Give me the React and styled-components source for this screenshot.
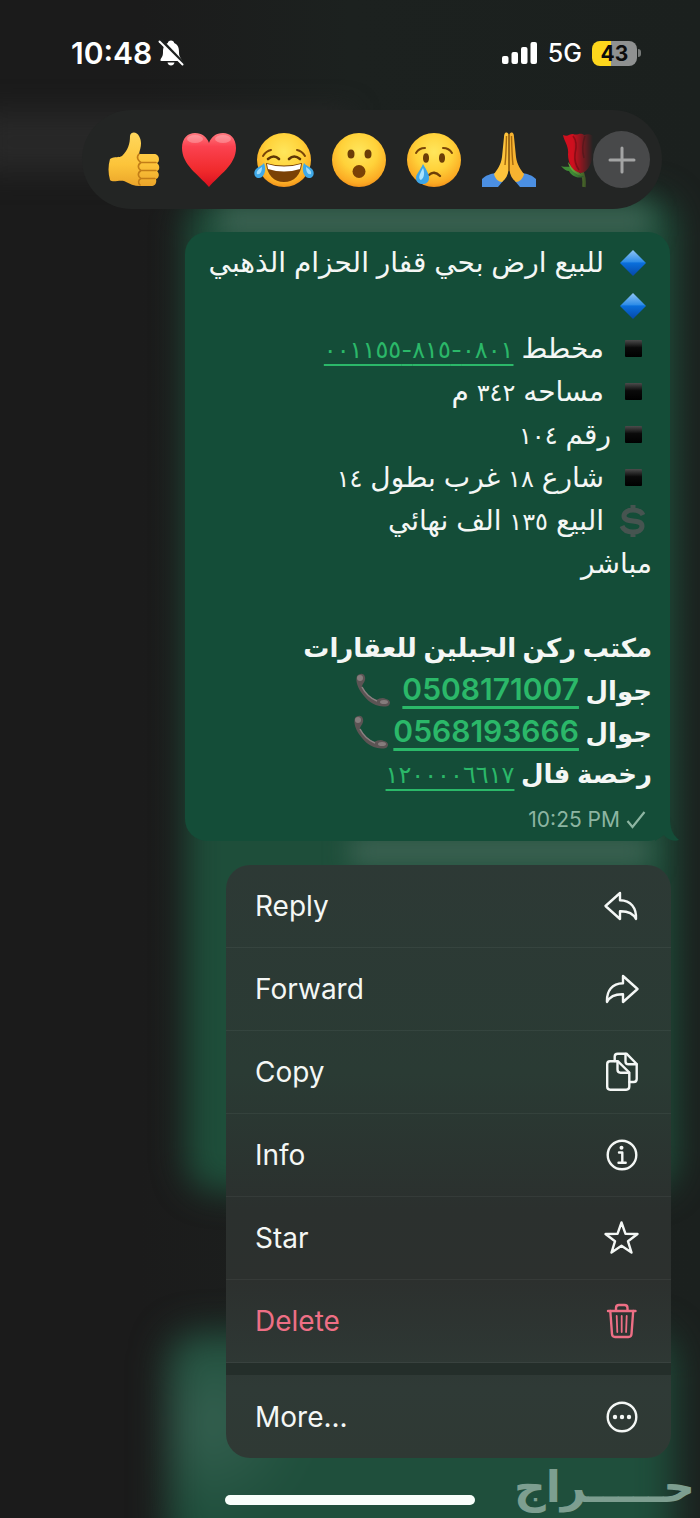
import React from "react";
import styled, { createGlobalStyle } from "styled-components";

const GlobalStyle = createGlobalStyle`
  * {
    box-sizing: border-box;
  }
  body {
    margin: 0;
    background: #1b1b1b;
  }
  button {
    border: 0;
    padding: 0;
    background: none;
    color: inherit;
    font: inherit;
    cursor: pointer;
  }
  p {
    margin: 0;
  }
  svg {
    display: block;
    flex-shrink: 0;
  }
`;

const ThumbsUp = () => (
  <svg width="56" height="56" viewBox="0 0 56 56">
    <defs>
      <linearGradient id="thumb" x1="0" y1="0" x2="0" y2="1">
        <stop offset="0" stopColor="#ffd75c" />
        <stop offset="0.6" stopColor="#fcc43a" />
        <stop offset="1" stopColor="#eba52a" />
      </linearGradient>
    </defs>
    <path
      fill="url(#thumb)"
      d="M4 27C9 24 13 26 16 24C22 18 24 12 24 4C25-1 31 0 33 4C37 11 34 17 33 22L48 22C54 22 54 30 51 31C54 33 54 38 51 39C54 42 53 46 50 47C51 51 49 54 45 54L34 54C28 54 24 52 18 49C12 48 7 51 4 48C2 41 2 34 4 27Z"
    />
    <path
      fill="none"
      stroke="#c27d17"
      strokeWidth="1.6"
      strokeLinecap="round"
      d="M33 22C30 25 32 29 35 30.500L50 30.500M35 30.500C31 33 32 37 35 38.500L50 38.500M35 38.500C31 41 32 45 35 46.500L49 46.500M35 46.500C32 48 32 51 34 53"
    />
  </svg>
);

const Heart = () => (
  <svg width="56" height="56" viewBox="0 0 56 56">
    <defs>
      <linearGradient id="heart" x1="0" y1="0" x2="0" y2="1">
        <stop offset="0" stopColor="#ff7a80" />
        <stop offset="0.25" stopColor="#fb4250" />
        <stop offset="0.7" stopColor="#f02a2c" />
        <stop offset="1" stopColor="#d9101f" />
      </linearGradient>
    </defs>
    <path
      fill="url(#heart)"
      d="M28 55C18 43 1 33 1 16C1 6 7 1 14 1C21 1 26 5 28 11C30 5 35 1 42 1C49 1 55 6 55 16C55 33 38 43 28 55Z"
    />
    <ellipse cx="14" cy="7" rx="8" ry="4" fill="#fff" opacity="0.25" />
    <ellipse cx="42" cy="7" rx="8" ry="4" fill="#fff" opacity="0.25" />
  </svg>
);

const FaceBase = ({ id }) => (
  <>
    <defs>
      <radialGradient id={id} cx="0.5" cy="0.35" r="0.68">
        <stop offset="0" stopColor="#ffe65c" />
        <stop offset="0.5" stopColor="#ffd23a" />
        <stop offset="0.85" stopColor="#fbab24" />
        <stop offset="1" stopColor="#ee8a18" />
      </radialGradient>
    </defs>
    <circle cx="28" cy="28" r="27" fill={`url(#${id})`} />
  </>
);

const Joy = () => (
  <svg width="60" height="56" viewBox="-2 0 60 56">
    <FaceBase id="joy" />
    <path
      fill="none"
      stroke="#7a4508"
      strokeWidth="2"
      strokeLinecap="round"
      d="M7 24Q10 19 15 18M49 24Q46 19 41 18"
    />
    <path
      fill="none"
      stroke="#5f3606"
      strokeWidth="2.6"
      strokeLinecap="round"
      d="M12 27Q18 22 23 27M33 27Q38 22 44 27"
    />
    <path fill="#7a4106" d="M10 31Q28 36 46 31C45 43 38 50 28 50C18 50 11 43 10 31Z" />
    <path fill="#fff" d="M11 32Q28 37 45 32L44 37Q28 42 12 37Z" />
    <path fill="#3fa9e8" d="M8 31C11 38 8 46 3 46C-2 46-3 40 0 37C3 34 6 34 8 31Z" />
    <path fill="#3fa9e8" d="M48 31C45 38 48 46 53 46C58 46 59 40 56 37C53 34 50 34 48 31Z" />
    <path fill="#9fdcfb" d="M6 35C6 40 4 43 1 42C0 39 3 37 6 35ZM50 35C50 40 52 43 55 42C56 39 53 37 50 35Z" />
  </svg>
);

const Wow = () => (
  <svg width="56" height="56" viewBox="0 0 56 56">
    <FaceBase id="wow" />
    <ellipse cx="20" cy="22" rx="3.500" ry="4.500" fill="#6b3d07" />
    <ellipse cx="37" cy="22" rx="3.500" ry="4.500" fill="#6b3d07" />
    <ellipse cx="28" cy="39.500" rx="6.500" ry="6.500" fill="#7a4106" />
  </svg>
);

const Cry = () => (
  <svg width="56" height="56" viewBox="0 0 56 56">
    <FaceBase id="cry" />
    <path
      fill="none"
      stroke="#7a4508"
      strokeWidth="2"
      strokeLinecap="round"
      d="M10 21Q13 16 19 16M46 21Q43 16 37 16"
    />
    <ellipse cx="20" cy="26" rx="3" ry="4.800" fill="#6b3d07" />
    <ellipse cx="36" cy="26" rx="3" ry="4.800" fill="#6b3d07" />
    <path
      fill="none"
      stroke="#6b3d07"
      strokeWidth="2.4"
      strokeLinecap="round"
      d="M23 43Q28 38 34 44"
    />
    <path fill="#3da5e6" d="M17 32C21 39 23 42 23 46C23 50 20 52 17 52C13 52 10 50 10 46C10 42 14 39 17 32Z" />
    <path fill="#a9e2fc" d="M17 36C19 41 18 46 15 48C12 47 13 43 17 36Z" />
  </svg>
);

const Pray = () => (
  <svg width="56" height="56" viewBox="0 0 56 56">
    <path fill="#4b8fe2" d="M1 47C5 43 10 42 14 41L22 49L17 55L1 55Z" />
    <path fill="#4b8fe2" d="M55 47C51 43 46 42 42 41L34 49L39 55L55 55Z" />
    <path
      fill="#fdc33c"
      d="M27.500 2C25-1 23 1 23 5L21 25C20 33 16 38 13 42C14 47 18 50 21 50C25 47 27 43 27.500 38Z"
    />
    <path
      fill="#f7b330"
      d="M28.500 2C31-1 33 1 33 5L35 25C36 33 40 38 43 42C42 47 38 50 35 50C31 47 29 43 28.500 38Z"
    />
    <path fill="none" stroke="#a5690f" strokeWidth="1.400" d="M28 2L28 39M25.500 4Q25 24 24 33M30.500 4Q31 24 32 33" />
  </svg>
);

const Rose = () => (
  <svg width="56" height="56" viewBox="0 0 56 56">
    <path fill="none" stroke="#6ba62f" strokeWidth="3.500" d="M25 38Q29 45 28 55" />
    <path fill="#3f8b35" d="M5 34C11 36 15 33 19 37L28 45C20 47 15 43 13 39Q9 39 5 34Z" />
    <path fill="#67a43a" d="M12 30C16 36 22 38 27 44C19 43 13 37 12 30Z" />
    <path
      fill="#cf0f1e"
      d="M7 3C12 5 13 2 17 2C21 4 24 0 28 3C33 1 37 3 40 6C36 12 39 24 34 33Q31 40 25 41C17 40 12 32 12 22C13 14 8 9 7 3Z"
    />
    <path fill="none" stroke="#960a15" strokeWidth="1.600" d="M17 4Q22 10 19 22Q18 31 23 38M29 4Q25 15 28 26" />
  </svg>
);

const reactions = [
  { name: "Thumbs up", art: <ThumbsUp /> },
  { name: "Red heart", art: <Heart /> },
  { name: "Tears of joy", art: <Joy /> },
  { name: "Surprised", art: <Wow /> },
  { name: "Crying", art: <Cry /> },
  { name: "Folded hands", art: <Pray /> },
  { name: "Rose", art: <Rose /> },
];

const icons = {
  reply: (
    <path d="M17 7L2.500 20L17 33V25.200C25 25 30 27 33 33C33.500 22 28 14.500 17 14.300Z" />
  ),
  forward: (
    <path d="M20 7L34.500 20L20 33V25.200C12 25 7 27 4 33C3.500 22 9 14.500 20 14.300Z" />
  ),
  copy: (
    <>
      <path d="M7 9.300H15L26.300 20.500V34.500Q26.300 37.700 23.200 37.700H7.200Q4.200 37.700 4.200 34.500V12.300Q4.200 9.300 7 9.300Z" />
      <path d="M14.500 9.500V17.500Q14.500 20.700 17.500 20.700H26" />
      <path d="M11.700 9V4.500Q11.700 1.700 14.700 1.700H23.500L33.700 12V27Q33.700 30 30.700 30H26.500" />
      <path d="M22.500 2V9.500Q22.500 12.300 25.500 12.300H33.500" />
    </>
  ),
  info: (
    <>
      <circle cx="19" cy="20" r="14.300" />
      <path d="M16 17.500H19.300V27.500M15.500 27.700H22.700" />
      <circle cx="18.500" cy="12.700" r="2" fill="currentColor" stroke="none" />
    </>
  ),
  star: (
    <path d="M18.500 4.500L22.500 15.800L34.500 16L25 23.300L28.500 34.500L18.500 27.800L8.500 34.500L12 23.300L2.500 16L14.500 15.800Z" />
  ),
  trash: (
    <>
      <path d="M5 10H32.500M13 9.500V7Q13 4 16 4H21.500Q24.500 4 24.500 7V9.500" />
      <path d="M7.300 10L9 33Q9.200 36 12 36H25.500Q28.300 36 28.500 33L30.200 10" />
      <path strokeWidth="1.800" d="M13.700 15L14.300 31M18.700 15V31M23.700 15L23.100 31" />
    </>
  ),
  more: (
    <>
      <circle cx="19" cy="20" r="14.300" />
      <g fill="currentColor" stroke="none">
        <circle cx="12" cy="20" r="2.200" />
        <circle cx="19" cy="20" r="2.200" />
        <circle cx="26" cy="20" r="2.200" />
      </g>
    </>
  ),
};

const MenuIcon = ({ name }) => (
  <svg
    width="36"
    height="40"
    viewBox="0 0 36 40"
    fill="none"
    stroke="currentColor"
    strokeWidth="2.400"
    strokeLinejoin="round"
    strokeLinecap="round"
    aria-hidden="true"
  >
    {icons[name]}
  </svg>
);

const Diamond = () => (
  <svg width="38" height="28" viewBox="0 0 38 28">
    <defs>
      <linearGradient id="diamond" x1="0" y1="0" x2="0" y2="1">
        <stop offset="0" stopColor="#8fc4f5" />
        <stop offset="0.45" stopColor="#2f8de8" />
        <stop offset="0.5" stopColor="#0a6fdc" />
        <stop offset="1" stopColor="#0648a8" />
      </linearGradient>
    </defs>
    <path fill="url(#diamond)" d="M19 1L32 14L19 27L6 14Z" />
  </svg>
);

const Square = () => (
  <svg width="38" height="28" viewBox="0 0 38 28">
    <defs>
      <linearGradient id="square" x1="0" y1="0" x2="0" y2="1">
        <stop offset="0" stopColor="#4c4c4c" />
        <stop offset="0.45" stopColor="#0a0a0a" />
        <stop offset="1" stopColor="#000" />
      </linearGradient>
    </defs>
    <rect x="11" y="5" width="17" height="17" rx="1" fill="url(#square)" />
  </svg>
);

const Dollar = () => (
  <svg width="38" height="36" viewBox="0 0 38 36">
    <path
      fill="none"
      stroke="#465450"
      strokeWidth="5"
      d="M29 12C27 8 23 7 19 7C13 7 10 10 10 13C10 21 28 15 28 23C28 27 24 29 19 29C14 29 10 28 8 23M19 2V7M19 29V34"
    />
  </svg>
);

const Phone = () => (
  <svg width="38" height="36" viewBox="0 0 38 36">
    <path
      fill="#5c5454"
      d="M3 4C6 1 10 1 11 5C12 9 9 11 8 14C10 20 16 25 22 28C26 26 29 25 32 27C37 28 37 32 34 34C26 36 16 32 10 24C4 17 1 9 3 4Z"
    />
    <path fill="none" stroke="#8b8282" strokeWidth="1.500" d="M8 15C11 21 16 26 23 29" />
    <circle cx="6" cy="6" r="3" fill="#857c7c" />
    <ellipse cx="30" cy="30" rx="4" ry="2" fill="#857c7c" />
  </svg>
);

const menu = [
  { label: "Reply", icon: "reply" },
  { label: "Forward", icon: "forward" },
  { label: "Copy", icon: "copy" },
  { label: "Info", icon: "info" },
  { label: "Star", icon: "star" },
  { label: "Delete", icon: "trash", danger: true },
];

function StatusBar() {
  return (
    <Status>
      <Clock>
        <span>10:48</span>
        <svg width="28" height="28" viewBox="0 0 28 28" fill="#fff">
          <path d="M14 1.500C15.800 1.500 17 2.600 17.200 4C21 5.500 22 9 22 13C22 17 23 18 24.500 20.500Q25 22 23.500 22H4.500Q3 22 3.500 20.500C5 18 6 17 6 13C6 9 7 5.500 10.800 4C11 2.600 12.200 1.500 14 1.500Z" />
          <path d="M10.500 23.500H17.500Q16.800 26.500 14 26.500Q11.200 26.500 10.500 23.500Z" />
          <path stroke="#1e2120" strokeWidth="3" d="M4 1L28 26" />
          <path stroke="#fff" strokeWidth="2" strokeLinecap="round" d="M2.500 2.500L25.500 25.500" />
        </svg>
      </Clock>
      <Radio>
        <svg width="36" height="24" viewBox="0 0 36 24" fill="#fff">
          <rect x="0" y="15" width="6.500" height="8" rx="2" />
          <rect x="9.500" y="11" width="6.500" height="12" rx="2" />
          <rect x="19" y="6" width="6.500" height="17" rx="2" />
          <rect x="28.500" y="1" width="6.500" height="22" rx="2" />
        </svg>
        <Network>5G</Network>
        <BatteryWrap>
          <Battery>43</Battery>
          <BatteryTip />
        </BatteryWrap>
      </Radio>
    </Status>
  );
}

function Message() {
  return (
    <Bubble dir="rtl" lang="ar">
      <Text>
        <Line>
          <Diamond />
          <span>للبيع ارض بحي قفار الحزام الذهبي</span>
        </Line>
        <Line>
          <Diamond />
        </Line>
        <Line>
          <Square />
          <span>
            مخطط <Link href="tel:0801815001155">٠٨٠١-٨١٥-٠٠١١٥٥</Link>
          </span>
        </Line>
        <Line>
          <Square />
          <span>
            مساحه <Num>٣٤٢</Num> م
          </span>
        </Line>
        <Line $tight>
          <Square />
          <span>
            رقم <Num>١٠٤</Num>
          </span>
        </Line>
        <Line>
          <Square />
          <span>
            شارع <Num>١٨</Num> غرب بطول <Num>١٤</Num>
          </span>
        </Line>
        <Line>
          <Dollar />
          <span>
            البيع <Num>١٣٥</Num> الف نهائي
          </span>
        </Line>
        <Line>مباشر</Line>
      </Text>
      <Office>
        <Line>مكتب ركن الجبلين للعقارات</Line>
        <Line>
          <span>
            جوال <PhoneLink href="tel:0508171007">0508171007</PhoneLink>
          </span>
          <Phone />
        </Line>
        <Line $tight>
          <span>
            جوال <PhoneLink href="tel:0568193666">0568193666</PhoneLink>
          </span>
          <Phone />
        </Line>
        <Line>
          <span>
            رخصة فال <Link href="tel:1200006617">١٢٠٠٠٠٦٦١٧</Link>
          </span>
        </Line>
      </Office>
      <Meta dir="ltr">
        <span>10:25 PM</span>
        <svg width="20" height="20" viewBox="0 0 20 20" fill="none" stroke="currentColor" strokeWidth="2.200">
          <path d="M1.500 11L6.500 17L18.500 2" />
        </svg>
      </Meta>
      <Tail viewBox="0 0 24 24">
        <path fill="#144d38" d="M0 0H15C15 11 17 17 24 23C18 25 12 22 9 18L0 24Z" />
      </Tail>
    </Bubble>
  );
}

function App() {
  return (
    <Page>
      <GlobalStyle />
      <Backdrop aria-hidden="true">
        <Header />
        <Glow />
        <Shine $top={206} $left={220} />
        <Shine $top={836} $left={350} />
        <LowerGlow />
      </Backdrop>
      <StatusBar />
      <Reactions>
        <Strip>
          {reactions.map(({ name, art }) => (
            <Reaction key={name} aria-label={name}>
              {art}
            </Reaction>
          ))}
        </Strip>
        <Plus aria-label="More reactions">
          <svg width="28" height="28" viewBox="0 0 28 28" stroke="#a3a4a4" strokeWidth="3" strokeLinecap="round">
            <path d="M14 2V26M2 14H26" />
          </svg>
        </Plus>
      </Reactions>
      <Message />
      <Menu>
        {menu.map(({ label, icon, danger }) => (
          <Item key={label} $danger={danger}>
            <span>{label}</span>
            <MenuIcon name={icon} />
          </Item>
        ))}
        <Divider />
        <Item>
          <span>More...</span>
          <MenuIcon name="more" />
        </Item>
      </Menu>
      <Footer>
        <HomeIndicator />
        <Watermark lang="ar">حـــــراج</Watermark>
      </Footer>
    </Page>
  );
}

export default App;

const Page = styled.div`
  position: relative;
  isolation: isolate;
  display: flex;
  flex-direction: column;
  min-height: 100vh;
  color: #f4f7f5;
  font-family: Inter, "Liberation Sans", sans-serif;
`;
const Backdrop = styled.div`
  position: absolute;
  inset: 0;
  z-index: -1;
  overflow: hidden;
  background: linear-gradient(90deg, #1b1b1b 0%, #1b1b1b 20%, #1c211f 50%, #1b201e 100%);
`;
const Header = styled.div`
  position: absolute;
  left: -20px;
  right: 50%;
  top: 112px;
  height: 60px;
  background: #282828;
  filter: blur(14px);
`;
const Glow = styled.div`
  position: absolute;
  left: 186px;
  right: 24px;
  top: 196px;
  height: 996px;
  border-radius: 30px;
  background: #1e4e3a;
  filter: blur(16px);
`;
const Shine = styled.div`
  position: absolute;
  left: ${({ $left }) => $left}px;
  right: 50px;
  top: ${({ $top }) => $top}px;
  height: 30px;
  background: #3c6252;
  filter: blur(12px);
`;
const LowerGlow = styled.div`
  position: absolute;
  left: 168px;
  right: 26px;
  top: 1332px;
  bottom: -40px;
  border-radius: 30px;
  background: radial-gradient(circle at 40px 90px, #356050 0, #1f4f3c 100px);
  filter: blur(18px);
`;
const Status = styled.header`
  display: flex;
  justify-content: space-between;
  align-items: center;
  height: 106px;
  padding: 0 59px 0 71px;
`;
const Clock = styled.div`
  display: flex;
  align-items: center;
  gap: 5px;
  color: #fff;
  font-size: 30px;
  font-weight: 600;
`;
const Radio = styled.div`
  display: flex;
  align-items: center;
  gap: 10px;
`;
const Network = styled.span`
  color: #fff;
  font-size: 25px;
  font-weight: 500;
`;
const BatteryWrap = styled.div`
  display: flex;
  align-items: center;
  gap: 1px;
`;
const Battery = styled.div`
  width: 45px;
  height: 25px;
  border-radius: 8px;
  background: linear-gradient(90deg, #fdd61c 43%, #8f9191 43%);
  color: #0c0c0c;
  font-size: 21px;
  font-weight: 700;
  line-height: 25px;
  text-align: center;
`;
const BatteryTip = styled.div`
  width: 3px;
  height: 8px;
  border-radius: 0 3px 3px 0;
  background: #777a79;
`;
const Reactions = styled.div`
  display: flex;
  align-items: center;
  height: 99px;
  margin: 4px 38px 23px 82px;
  padding: 0 12px 0 24px;
  border-radius: 50px;
  background: #232524;
`;
const Strip = styled.div`
  display: flex;
  flex: 1;
  min-width: 0;
  gap: 19px;
  overflow: hidden;
  mask-image: linear-gradient(90deg, #000 calc(100% - 20px), transparent);
`;
const Reaction = styled.button`
  display: flex;
  flex: 0 0 56px;
  justify-content: center;
  min-width: 0;
  height: 56px;
`;
const Plus = styled.button`
  display: flex;
  flex: 0 0 57px;
  align-items: center;
  justify-content: center;
  height: 57px;
  border-radius: 50%;
  background: #48494a;
`;
const Bubble = styled.article`
  position: relative;
  margin: 0 30px 0 185px;
  padding: 9px 18px;
  border-radius: 22px;
  background: #144d38;
  font-family: Inter, "DejaVu Sans", sans-serif;
`;
const Text = styled.div`
  font-size: 28px;
  line-height: 43px;
`;
const Office = styled.div`
  margin-top: 42px;
  font-size: 26px;
  font-weight: 600;
  line-height: 42px;
`;
const Line = styled.p`
  display: flex;
  align-items: center;
  gap: ${({ $tight }) => ($tight ? 3 : 10)}px;
  height: 1lh;
  white-space: nowrap;
`;
const Num = styled.span`
  font-size: 24px;
`;
const Link = styled.a`
  color: #2bb869;
  font-size: 24px;
  font-weight: 400;
  text-decoration: underline;
  text-decoration-thickness: 2px;
  text-underline-offset: 6px;
`;
const PhoneLink = styled(Link)`
  font-size: 30px;
  font-weight: 600;
  text-decoration-thickness: 3px;
`;
const Meta = styled.div`
  display: flex;
  align-items: center;
  justify-content: flex-end;
  gap: 6px;
  margin-top: 13px;
  padding-right: 6px;
  color: #8db5a2;
  font-size: 21px;
  line-height: 24px;
`;
const Tail = styled.svg`
  position: absolute;
  right: -9px;
  bottom: 0;
  width: 24px;
  height: 24px;
`;
const Menu = styled.div`
  display: flex;
  flex-direction: column;
  margin: 24px 29px 0 226px;
  border-radius: 24px;
  overflow: hidden;
  background: linear-gradient(#2d3935 0%, #2a3b34 35%, #2b302e 58%, #2c302e 70%, #2f3a36 88%, #2f3934 100%);
`;
const Item = styled.button`
  display: flex;
  align-items: center;
  justify-content: space-between;
  height: 83px;
  padding: 0 32px 0 29px;
  border-bottom: 1px solid rgba(255, 255, 255, 0.05);
  color: ${({ $danger }) => ($danger ? "#ee6f85" : "#f4f7f5")};
  font-size: 28px;
  text-align: left;
  &:last-child {
    border-bottom: 0;
  }
`;
const Divider = styled.div`
  height: 12px;
  background: #242e2a;
`;
const Footer = styled.footer`
  position: relative;
  display: flex;
  justify-content: center;
  padding: 37px 0 14px;
`;
const HomeIndicator = styled.div`
  width: 250px;
  height: 10px;
  border-radius: 5px;
  background: #f8fffb;
`;
const Watermark = styled.div`
  position: absolute;
  right: 5px;
  bottom: 8px;
  color: #7d9e90;
  font-family: "DejaVu Sans", sans-serif;
  font-size: 44px;
  font-weight: 700;
  line-height: 48px;
`;
